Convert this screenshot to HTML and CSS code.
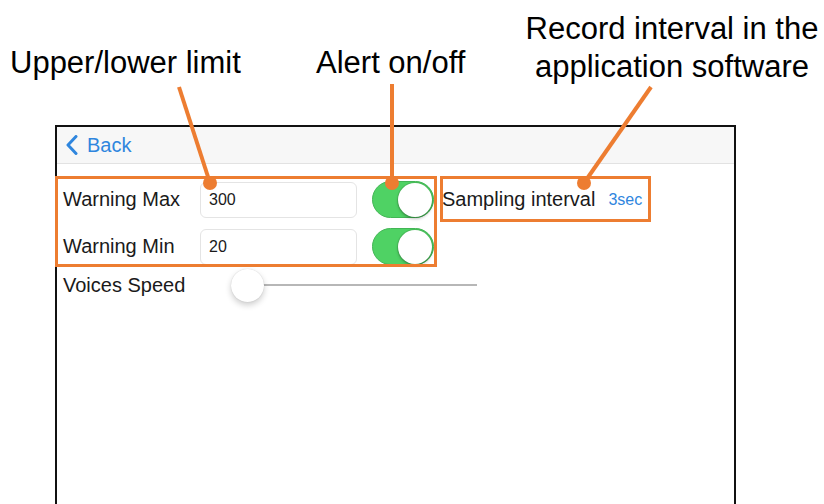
FILE: index.html
```html
<!DOCTYPE html>
<html lang="en">
<head>
<meta charset="UTF-8" />
<title>Settings screen</title>
<link rel="stylesheet" href="styles.css">
</head>
<body>

<div class="figure">
  <div class="callouts">
    <div class="callout callout-limits">Upper/lower limit</div>
    <div class="callout callout-alert">Alert on/off</div>
    <div class="callout callout-record">Record interval in the<br>application software</div>
  </div>

  <div class="device">
    <div class="navbar">
      <a class="back" href="#">
        <svg width="12" height="20" viewBox="0 0 12 20"><path d="M10 1.5 L2 10 L10 18.5" /></svg>
        Back
      </a>
    </div>

    <div class="settings">
      <div class="limits">
        <div class="row">
          <span class="label">Warning Max</span>
          <span class="field">300</span>
          <span class="switch"><span class="knob"></span></span>
        </div>
        <div class="row">
          <span class="label">Warning Min</span>
          <span class="field">20</span>
          <span class="switch"><span class="knob"></span></span>
        </div>
        <div class="row speed">
          <span class="label">Voices Speed</span>
          <div class="slider"><span class="thumb"></span></div>
        </div>
      </div>
      <div class="sampling">
        <span class="label">Sampling interval</span>
        <span class="value">3sec</span>
      </div>
    </div>
  </div>

  <!-- annotation marks drawn on top of the screenshot -->
  <div class="mark mark-limits"></div>
  <div class="mark mark-sampling"></div>
  <svg class="leaders" width="824" height="504" viewBox="0 0 824 504">
    <line x1="179" y1="87" x2="210" y2="183" />
    <circle cx="210" cy="183" r="7" />
    <line x1="392" y1="84" x2="392" y2="183" />
    <circle cx="392" cy="183" r="7" />
    <line x1="651" y1="87" x2="584" y2="183" />
    <circle cx="584" cy="183" r="7" />
  </svg>
</div>

</body>
</html>
```

FILE: styles.css
```css
body {
  margin: 0;
  background: #fff;
  font-family: 'Liberation Sans', Arial, sans-serif;
  color: #111;
}
.figure {
  position: relative;
  width: 824px;
  height: 504px;
  overflow: hidden;
}
.callouts {
  height: 125px;
}
.callout {
  position: absolute;
  font-size: 31px;
  line-height: 38px;
  color: #000;
  white-space: nowrap;
}
.callout-limits {
  left: 10px;
  top: 44px;
}
.callout-alert {
  left: 316px;
  top: 44px;
}
.callout-record {
  left: 522px;
  top: 10px;
  width: 300px;
  text-align: center;
}
.device {
  margin-left: 55px;
  width: 681px;
  height: 379px;
  box-sizing: border-box;
  border: 2px solid #111;
  border-bottom: none;
  background: #fff;
}
.navbar {
  height: 36px;
  background: #f7f7f7;
  border-bottom: 1px solid #e2e2e2;
  display: flex;
  align-items: center;
  padding-left: 9px;
}
.back {
  display: flex;
  align-items: center;
  gap: 9px;
  color: #2f86de;
  font-size: 20px;
  text-decoration: none;
}
.back svg path {
  fill: none;
  stroke: #2f86de;
  stroke-width: 3;
  stroke-linecap: round;
  stroke-linejoin: round;
}
.settings {
  display: flex;
  padding-top: 17px;
}
.limits {
  width: 380px;
  box-sizing: border-box;
  padding-left: 6px;
  display: flex;
  flex-direction: column;
  gap: 10px;
}
.row {
  display: grid;
  grid-template-columns: 122px 157px 62px;
  column-gap: 15px;
  align-items: center;
  height: 37px;
}
.label {
  font-size: 20px;
  color: #1a1a1a;
  white-space: nowrap;
}
.field {
  height: 36px;
  box-sizing: border-box;
  border: 1px solid #e4e4e4;
  border-radius: 6px;
  padding-left: 8px;
  display: flex;
  align-items: center;
  font-size: 16px;
  color: #1a1a1a;
}
.switch {
  height: 37px;
  border-radius: 19px;
  background: #4fd264;
  border: 1px solid #43b655;
  box-sizing: border-box;
  display: flex;
  justify-content: flex-end;
  align-items: center;
  padding-right: 1px;
}
.knob {
  width: 34px;
  height: 34px;
  border-radius: 50%;
  background: #fff;
  box-shadow: 0 2px 3px rgb(0 0 0 / 0.25), 0 0 0 1px rgb(60 150 70 / 0.35);
}
.speed {
  margin-top: -7px;
  height: 34px;
}
.slider {
  grid-column: 2 / span 2;
  margin-left: 31px;
  width: 246px;
  height: 34px;
  display: flex;
  align-items: center;
  background: linear-gradient(#b7b7b7, #b7b7b7) no-repeat 17px center / 229px 2px;
}
.thumb {
  width: 33px;
  height: 33px;
  border-radius: 50%;
  background: #fff;
  box-shadow: 0 3px 6px rgb(0 0 0 / 0.2), 0 0 1px rgb(0 0 0 / 0.2);
}
.sampling {
  display: flex;
  align-items: center;
  height: 37px;
  padding-left: 5px;
}
.sampling .value {
  margin-left: 13px;
  font-size: 16px;
  color: #2f86de;
}
.mark {
  position: absolute;
  border: 3px solid #ed7d31;
  box-sizing: border-box;
}
.mark-limits {
  left: 55px;
  top: 176px;
  width: 382px;
  height: 91px;
}
.mark-sampling {
  left: 440px;
  top: 176px;
  width: 211px;
  height: 46px;
}
.leaders {
  position: absolute;
  left: 0;
  top: 0;
  pointer-events: none;
}
.leaders line {
  stroke: #ed7d31;
  stroke-width: 4;
}
.leaders circle {
  fill: #ed7d31;
}
```
